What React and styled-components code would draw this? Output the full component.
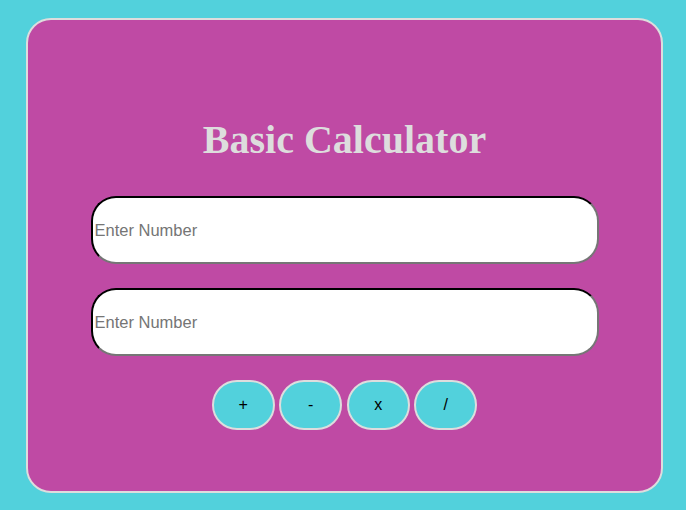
import styled, { createGlobalStyle } from "styled-components";

const GlobalStyle = createGlobalStyle`
  html, body {
    margin: 0;
    padding: 0;
    background: #52d1dc;
  }
  body {
    font-family: "Liberation Sans", Arial, sans-serif;
  }
`;

const Page = styled.div`
  padding: 18px 23px 17px 26px;
`;

const Card = styled.div`
  box-sizing: border-box;
  height: 475px;
  background: #bf4aa4;
  border: 2px solid #dddddd;
  border-radius: 25px;
  display: flex;
  flex-direction: column;
  align-items: center;
  padding-top: 97px;
`;

const Title = styled.h1`
  margin: 0 0 33px;
  font-family: "Liberation Serif", "Times New Roman", serif;
  font-weight: bold;
  font-size: 40px;
  line-height: 46px;
  color: #dddddd;
`;

const NumberInput = styled.input`
  box-sizing: border-box;
  width: 508px;
  height: 68px;
  margin-bottom: 24px;
  padding: 1px 2px;
  border: 2px inset #767676;
  border-top-color: #1f1f1f;
  border-left-color: #1f1f1f;
  border-radius: 25px;
  background: #ffffff;
  font-family: "Liberation Sans", Arial, sans-serif;
  font-size: 16.5px;
  color: #222;
  outline: none;

  &::placeholder {
    color: #757575;
  }
`;

const Buttons = styled.div`
  display: flex;
  gap: 4.5px;
`;

const OpButton = styled.button`
  box-sizing: border-box;
  width: 63px;
  height: 50px;
  background: #52d1dc;
  border: 2px solid #dddddd;
  border-radius: 25px;
  font-family: "Liberation Sans", Arial, sans-serif;
  font-size: 16px;
  color: #000;
  cursor: pointer;
`;

export default function App() {
  return (
    <>
      <GlobalStyle />
      <Page>
        <Card>
          <Title>Basic Calculator</Title>
          <NumberInput type="number" placeholder="Enter Number" />
          <NumberInput type="number" placeholder="Enter Number" />
          <Buttons>
            {["+", "-", "x", "/"].map((op) => (
              <OpButton key={op}>{op}</OpButton>
            ))}
          </Buttons>
        </Card>
      </Page>
    </>
  );
}
